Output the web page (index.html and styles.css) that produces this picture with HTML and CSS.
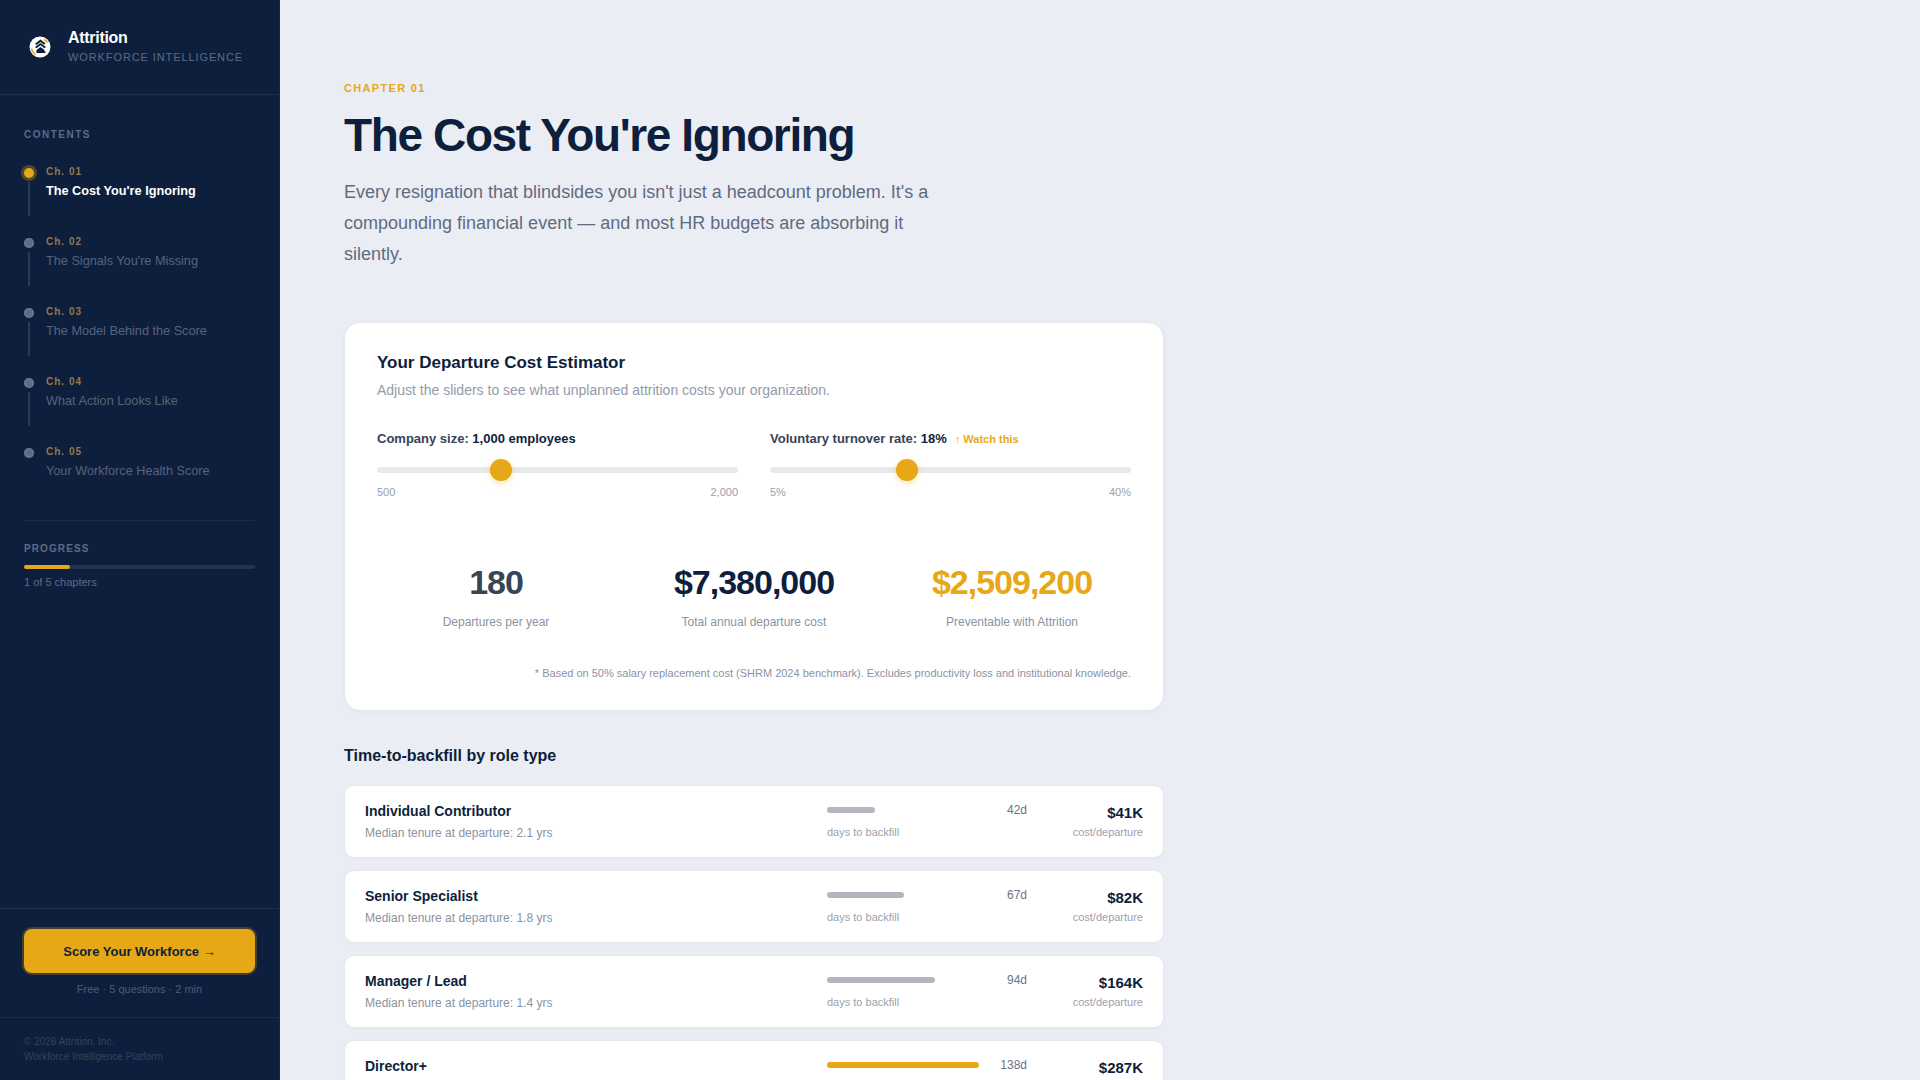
FILE: index.html
```html
<!DOCTYPE html>
<html lang="en">
<head>
<meta charset="utf-8">
<title>Attrition</title>
<link rel="stylesheet" href="styles.css">
</head>
<body>
<div class="app">
  <aside class="sidebar">
    <div class="brand">
      <svg class="logo" viewBox="0 0 22 22" width="22" height="22" aria-hidden="true">
        <circle cx="11" cy="11" r="10.500" fill="#fff"/>
        <path d="M2.500 12.500a8.600 8.600 0 0 0 4 6M15 3.500a8.600 8.600 0 0 1 3.500 3" stroke="#e6a817" stroke-width="1.600" fill="none"/>
        <path d="M11.500 3.500l5 4-1.500 1.200-3.500-2.800L7.500 9 6 7.800z" fill="#0d1f3c"/>
        <path d="M11.500 7l5.500 4-1.500 1.200-4-3-4 3L6 11z" fill="#0d1f3c"/>
        <path d="M7.500 14l4-3 4 3v1.500h1v1.500h-9z" fill="#0d1f3c"/>
      </svg>
      <div>
        <div class="brand-name">Attrition</div>
        <div class="brand-sub">WORKFORCE INTELLIGENCE</div>
      </div>
    </div>
    <nav class="toc">
      <div class="side-label">CONTENTS</div>
      <ol class="toc-list">
        <li class="toc-item active"><span class="dot"></span><div><div class="toc-ch">Ch. 01</div><div class="toc-title">The Cost You're Ignoring</div></div></li>
        <li class="toc-item"><span class="dot"></span><div><div class="toc-ch">Ch. 02</div><div class="toc-title">The Signals You're Missing</div></div></li>
        <li class="toc-item"><span class="dot"></span><div><div class="toc-ch">Ch. 03</div><div class="toc-title">The Model Behind the Score</div></div></li>
        <li class="toc-item"><span class="dot"></span><div><div class="toc-ch">Ch. 04</div><div class="toc-title">What Action Looks Like</div></div></li>
        <li class="toc-item last"><span class="dot"></span><div><div class="toc-ch">Ch. 05</div><div class="toc-title">Your Workforce Health Score</div></div></li>
      </ol>
    </nav>
    <div class="progress">
      <div class="side-label tight">PROGRESS</div>
      <div class="progress-track"><div class="progress-fill"></div></div>
      <div class="progress-text">1 of 5 chapters</div>
    </div>
    <div class="cta">
      <button class="cta-btn">Score Your Workforce →</button>
      <div class="cta-note">Free · 5 questions · 2 min</div>
    </div>
    <footer class="side-foot">© 2026 Attrition, Inc.<br>Workforce Intelligence Platform</footer>
  </aside>
  <main class="main">
    <div class="eyebrow">CHAPTER 01</div>
    <h1>The Cost You're Ignoring</h1>
    <p class="intro">Every resignation that blindsides you isn't just a headcount problem. It's a compounding financial event — and most HR budgets are absorbing it silently.</p>
    <section class="card">
      <h2>Your Departure Cost Estimator</h2>
      <p class="card-sub">Adjust the sliders to see what unplanned attrition costs your organization.</p>
      <div class="sliders">
        <div class="slider">
          <div class="slider-label">Company size: <b>1,000 employees</b></div>
          <div class="track"><span class="thumb thumb-a"></span></div>
          <div class="range"><span>500</span><span>2,000</span></div>
        </div>
        <div class="slider">
          <div class="slider-label">Voluntary turnover rate: <b>18%</b><span class="watch">↑ Watch this</span></div>
          <div class="track"><span class="thumb thumb-b"></span></div>
          <div class="range"><span>5%</span><span>40%</span></div>
        </div>
      </div>
      <div class="stats">
        <div class="stat"><div class="stat-val slate">180</div><div class="stat-label">Departures per year</div></div>
        <div class="stat"><div class="stat-val">$7,380,000</div><div class="stat-label">Total annual departure cost</div></div>
        <div class="stat"><div class="stat-val gold">$2,509,200</div><div class="stat-label">Preventable with Attrition</div></div>
      </div>
      <p class="note">* Based on 50% salary replacement cost (SHRM 2024 benchmark). Excludes productivity loss and institutional knowledge.</p>
    </section>
    <h3>Time-to-backfill by role type</h3>
    <div class="rows">
      <div class="row">
        <div class="role"><div class="role-name">Individual Contributor</div><div class="role-sub">Median tenure at departure: 2.1 yrs</div></div>
        <div class="days"><div class="days-top"><div class="bar-wrap"><div class="bar" style="width:48px"></div></div><span class="days-val">42d</span></div><div class="days-sub">days to backfill</div></div>
        <div class="cost"><div class="cost-val">$41K</div><div class="days-sub">cost/departure</div></div>
      </div>
      <div class="row">
        <div class="role"><div class="role-name">Senior Specialist</div><div class="role-sub">Median tenure at departure: 1.8 yrs</div></div>
        <div class="days"><div class="days-top"><div class="bar-wrap"><div class="bar" style="width:77px"></div></div><span class="days-val">67d</span></div><div class="days-sub">days to backfill</div></div>
        <div class="cost"><div class="cost-val">$82K</div><div class="days-sub">cost/departure</div></div>
      </div>
      <div class="row">
        <div class="role"><div class="role-name">Manager / Lead</div><div class="role-sub">Median tenure at departure: 1.4 yrs</div></div>
        <div class="days"><div class="days-top"><div class="bar-wrap"><div class="bar" style="width:108px"></div></div><span class="days-val">94d</span></div><div class="days-sub">days to backfill</div></div>
        <div class="cost"><div class="cost-val">$164K</div><div class="days-sub">cost/departure</div></div>
      </div>
      <div class="row">
        <div class="role"><div class="role-name">Director+</div><div class="role-sub">Median tenure at departure: 1.1 yrs</div></div>
        <div class="days"><div class="days-top"><div class="bar-wrap"><div class="bar hot" style="width:152px"></div></div><span class="days-val">138d</span></div><div class="days-sub">days to backfill</div></div>
        <div class="cost"><div class="cost-val">$287K</div><div class="days-sub">cost/departure</div></div>
      </div>
    </div>
  </main>
</div>
</body>
</html>
```
FILE: styles.css
```css
* { box-sizing: border-box; }
html, body { margin: 0; height: 100%; overflow: hidden; }
body { font-family: "Liberation Sans", Arial, sans-serif; background: #ebedf5; color: #0d1f3c; }
.app { display: flex; height: 1080px; overflow: hidden; }

.sidebar { width: 280px; flex: none; height: 1080px; background: #0d1f3c; border-right: 1px solid rgba(255,255,255,.03); display: flex; flex-direction: column; }
.brand { height: 95px; padding: 0 24px 0 29px; display: flex; align-items: center; gap: 17px; border-bottom: 1px solid rgba(255,255,255,.08); }
.logo { flex: none; }
.brand-name { font-size: 16px; font-weight: 700; letter-spacing: -.3px; color: #fff; line-height: 20px; margin-top: 0; }
.brand-sub { font-size: 11px; letter-spacing: .9px; color: #5d6b84; line-height: 17px; margin-top: 1px; }

.toc { padding: 33px 24px 0; }
.side-label { font-size: 10px; font-weight: 700; letter-spacing: 1.5px; color: #5d6b84; line-height: 14px; }
.side-label.tight { letter-spacing: 1.1px; }
.toc-list { list-style: none; margin: 23px 0 0; padding: 0; }
.toc-item { position: relative; display: flex; gap: 12px; height: 70px; padding-left: 10px; }
.toc-item::after { content: ""; position: absolute; left: 4px; top: 17px; width: 2px; height: 34px; background: #2a3a55; }
.toc-item.last { height: 75px; }
.toc-item.last::after { display: none; }
.dot { position: relative; left: -10px; top: 3px; flex: none; width: 10px; height: 10px; margin-right: -10px; border-radius: 50%; background: #5d6b84; box-shadow: inset 0 0 0 2px #66738a; }
.active .dot { background: #e6a817; box-shadow: 0 0 0 3px rgba(230,168,23,.3); }
.toc-ch { font-size: 10px; font-weight: 700; letter-spacing: 1px; color: #94784a; line-height: 14px; }
.toc-title { font-size: 12.7px; color: #56637c; line-height: 18px; margin-top: 3px; white-space: nowrap; }
.active .toc-title { color: #fff; font-weight: 700; }

.progress { margin: 0 24px; padding-top: 21px; border-top: 1px solid rgba(255,255,255,.06); }
.progress-track { height: 4px; margin-top: 9px; border-radius: 2px; background: #233450; }
.progress-fill { width: 46px; height: 4px; border-radius: 2px; background: #e6a817; }
.progress-text { font-size: 11px; color: #5d6b84; line-height: 14px; margin-top: 6px; }

.cta { margin-top: auto; padding: 20px 24px 0; height: 109px; border-top: 1px solid rgba(255,255,255,.08); text-align: center; }
.cta-btn { display: block; width: 100%; height: 44px; border: 0; border-radius: 8px; background: #e6a817; box-shadow: 0 0 0 2px rgba(230,168,23,.25); color: #0d1f3c; font: 700 13px "Liberation Sans", Arial, sans-serif; }
.cta-note { font-size: 11px; line-height: 14px; color: #4e5c76; margin-top: 9px; }
.side-foot { height: 63px; padding: 16px 24px 0; border-top: 1px solid rgba(255,255,255,.06); font-size: 10px; line-height: 15px; color: #33435f; }

.main { flex: 1; min-width: 0; padding: 80px 64px 0; }
.eyebrow { font-size: 11px; font-weight: 700; letter-spacing: 1.32px; color: #e6a817; line-height: 16px; }
h1 { margin: 12px 0 0; font-size: 46px; font-weight: 700; letter-spacing: -1.38px; line-height: 54px; color: #0d1f3c; }
.intro { margin: 15px 0 0; width: 600px; font-size: 18px; line-height: 31px; color: #5f6b80; }

.card { width: 820px; height: 389px; margin-top: 52px; padding: 30px 32px 32px; background: #fff; border: 1px solid #e6e8ef; border-radius: 16px; box-shadow: 0 1px 4px rgba(13,31,60,.04); }
h2 { margin: 0; font-size: 17px; font-weight: 700; line-height: 20px; color: #0d1f3c; }
.card-sub { margin: 7px 0 0; font-size: 14px; line-height: 20px; color: #939bab; }
.sliders { display: grid; grid-template-columns: 1fr 1fr; gap: 32px; margin-top: 31px; }
.slider-label { font-size: 13px; font-weight: 700; line-height: 16px; color: #374357; white-space: nowrap; }
.slider-label b { color: #0d1f3c; }
.watch { margin-left: 8px; font-size: 11px; color: #e6a817; }
.track { position: relative; height: 6px; margin-top: 20px; border-radius: 3px; background: #e8e9ec; }
.thumb { position: absolute; top: -8px; width: 22px; height: 22px; border-radius: 50%; background: #e6a817; box-shadow: 0 2px 6px rgba(230,168,23,.35); }
.thumb-a { left: 113px; }
.thumb-b { left: 126px; }
.range { display: flex; justify-content: space-between; margin-top: 12px; font-size: 11px; line-height: 14px; color: #9aa1ae; }
.stats { display: grid; grid-template-columns: repeat(3, 1fr); gap: 20px; margin-top: 63px; text-align: center; }
.stat-val { font-size: 34px; font-weight: 700; letter-spacing: -1px; line-height: 40px; color: #0d1f3c; }
.stat-val.slate { color: #374357; }
.stat-val.gold { color: #e6a817; }
.stat-label { font-size: 12px; line-height: 16px; color: #8a93a3; margin-top: 12px; }
.note { margin: 36px 0 0; text-align: right; font-size: 11px; line-height: 14px; color: #8a93a3; }

h3 { margin: 35px 0 0; font-size: 16px; font-weight: 700; line-height: 20px; color: #0d1f3c; }
.rows { display: flex; flex-direction: column; gap: 12px; margin-top: 19px; width: 820px; }
.row { display: flex; flex: none; height: 73px; padding: 16px 20px 0; background: #fff; border: 1px solid #e6e8ef; border-radius: 10px; box-shadow: 0 1px 3px rgba(13,31,60,.03); }
.role { flex: 1; }
.role-name { font-size: 14px; font-weight: 700; line-height: 18px; color: #0d1f3c; }
.role-sub { font-size: 12px; line-height: 16px; color: #8a93a3; margin-top: 5px; }
.days { width: 200px; margin-right: 40px; }
.days-top { display: flex; align-items: center; justify-content: space-between; height: 16px; }
.bar-wrap { width: 152px; }
.bar { height: 6px; border-radius: 3px; background: #b3b6be; }
.bar.hot { background: #e6a817; }
.days-val { font-size: 12px; color: #6b7485; }
.days-sub { font-size: 11px; line-height: 14px; color: #9aa1ae; margin-top: 7px; }
.cost { width: 76px; text-align: right; }
.cost-val { font-size: 15px; font-weight: 700; line-height: 18px; color: #0d1f3c; margin-top: 2px; }
.cost .days-sub { margin-top: 3px; }
```
